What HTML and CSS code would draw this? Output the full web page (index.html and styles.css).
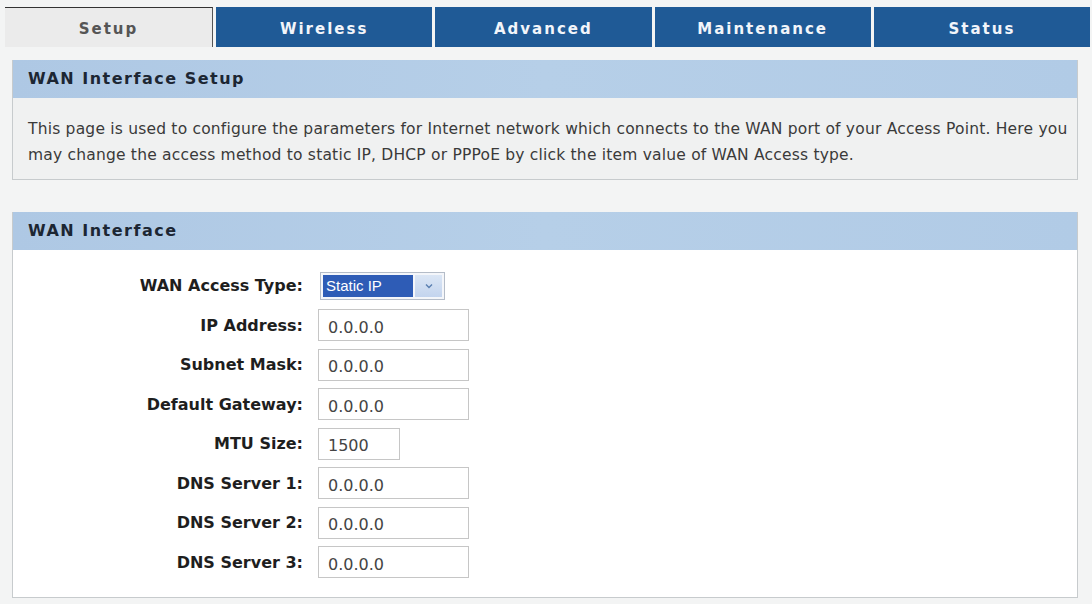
FILE: index.html
```html
<!DOCTYPE html>
<html lang="en">
<head>
    <meta charset="UTF-8">
    <title>WAN Interface Setup</title>
    <link rel="stylesheet" href="styles.css">
</head>
<body>

    <!-- Top menu -->
    <nav class="tabs">
        <a class="tab tab-active" href="#">Setup</a>
        <a class="tab" href="#">Wireless</a>
        <a class="tab" href="#">Advanced</a>
        <a class="tab" href="#">Maintenance</a>
        <a class="tab" href="#">Status</a>
    </nav>

    <!-- Intro -->
    <div class="box">
        <div class="box-title">WAN Interface Setup</div>
        <div class="box-body intro">
            This page is used to configure the parameters for Internet network which connects to the WAN port of your Access Point. Here you<br>
            may change the access method to static IP, DHCP or PPPoE by click the item value of WAN Access type.
        </div>
    </div>

    <!-- WAN form -->
    <div class="box box-form">
        <div class="box-title">WAN Interface</div>
        <div class="box-body form">
            <label class="field-label">WAN Access Type:</label>
            <div class="fake-select">
                <span class="fake-select-value">Static IP</span>
                <span class="fake-select-btn">
                    <svg width="8" height="6" viewBox="0 0 8 6"><path d="M1 1.5 L4 4.5 L7 1.5" fill="none" stroke="#5a7fb0" stroke-width="1.4"/></svg>
                </span>
            </div>

            <label class="field-label">IP Address:</label>
            <input class="field" type="text" value="0.0.0.0">

            <label class="field-label">Subnet Mask:</label>
            <input class="field" type="text" value="0.0.0.0">

            <label class="field-label">Default Gateway:</label>
            <input class="field" type="text" value="0.0.0.0">

            <label class="field-label">MTU Size:</label>
            <input class="field field-short" type="text" value="1500">

            <label class="field-label">DNS Server 1:</label>
            <input class="field" type="text" value="0.0.0.0">

            <label class="field-label">DNS Server 2:</label>
            <input class="field" type="text" value="0.0.0.0">

            <label class="field-label">DNS Server 3:</label>
            <input class="field" type="text" value="0.0.0.0">
        </div>
    </div>

</body>
</html>
```

FILE: styles.css
```css
body {
    margin: 0;
    padding: 7px 2px 0 5px;
    background-color: #f3f4f4;
    font-family: "DejaVu Sans", Verdana, sans-serif;
    color: #333;
}
.tabs {
    display: flex;
    gap: 3px;
    height: 40px;
}
.tab {
    flex: 1;
    display: flex;
    align-items: center;
    justify-content: center;
    padding-top: 3px;
    background-color: #1f5a96;
    color: #f2f5fa;
    font-size: 15px;
    font-weight: bold;
    letter-spacing: 2px;
    text-decoration: none;
}
.tab-active {
    flex: 0 0 208px;
    box-sizing: border-box;
    background-color: #ebebeb;
    color: #555;
    border-top: 1px solid #333;
    border-right: 1px solid #555;
}
.box {
    margin: 13px 12px 0 7px;
    border: 1px solid #c7cbcd;
    border-top: none;
}
.box-form {
    margin-top: 32px;
}
.box-title {
    height: 38px;
    line-height: 38px;
    padding-left: 15px;
    background: linear-gradient(to right, #aec8e4, #b6cfe8 50%, #b1cbe6);
    color: #1c2633;
    font-size: 16px;
    font-weight: bold;
    letter-spacing: 1.5px;
}
.box-body {
    background-color: #f0f1f1;
}
.intro {
    padding: 18px 0 11px 15px;
    font-size: 15.5px;
    letter-spacing: 0.2px;
    line-height: 26px;
    color: #3a3a3a;
    white-space: nowrap;
}
.form {
    background-color: #fff;
    display: grid;
    grid-template-columns: 290px auto;
    grid-auto-rows: 39.5px;
    column-gap: 15px;
    align-items: center;
    justify-items: start;
    padding: 16px 0 15px;
}
.field-label {
    justify-self: end;
    font-size: 16px;
    font-weight: bold;
    color: #1e1e1e;
}
.field {
    box-sizing: border-box;
    width: 151px;
    height: 32px;
    padding: 4px 0 0 9px;
    border: 1px solid #c6c6c6;
    background-color: #fff;
    font-family: "DejaVu Sans", Verdana, sans-serif;
    font-size: 16px;
    color: #444;
    outline: none;
}
.field-short {
    width: 82px;
}
.fake-select {
    display: flex;
    box-sizing: border-box;
    width: 125px;
    height: 28px;
    margin-left: 2px;
    padding: 2px;
    gap: 2px;
    border: 1px solid #b4bcc8;
    background-color: #f4f6fa;
}
.fake-select-value {
    flex: 1;
    display: flex;
    align-items: center;
    padding-left: 3px;
    background-color: #2e5cb6;
    color: #fff;
    font-family: "Liberation Sans", Arial, sans-serif;
    font-size: 15px;
}
.fake-select-btn {
    width: 27px;
    display: flex;
    align-items: center;
    justify-content: center;
    background: linear-gradient(#dbe6f5, #c3d4ee);
}
```
